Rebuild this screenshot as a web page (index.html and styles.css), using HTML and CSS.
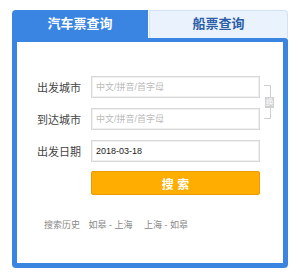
FILE: index.html
```html
<!DOCTYPE html>
<html lang="zh-CN">
<head>
  <meta charset="UTF-8" />
  <title>汽车票查询</title>
  <link rel="stylesheet" href="styles.css">
</head>
<body>
  <div class="search-box">
    <div class="tabs">
      <div class="tab active">汽车票查询</div>
      <div class="tab">船票查询</div>
    </div>
    <div class="panel">
      <form class="form">
        <label class="label" for="from">出发城市</label>
        <input class="field" type="text" id="from" placeholder="中文/拼音/首字母" />
        <div class="swap"><span class="swap-btn">换</span></div>

        <label class="label" for="to">到达城市</label>
        <input class="field" type="text" id="to" placeholder="中文/拼音/首字母" />

        <label class="label" for="date">出发日期</label>
        <input class="field" type="text" id="date" value="2018-03-18" />

        <button class="submit" type="button">搜 索</button>
      </form>

      <div class="history">
        <span class="history-title">搜索历史</span>
        <a href="#">如皋 - 上海</a>
        <a href="#">上海 - 如皋</a>
      </div>
    </div>
  </div>
</body>
</html>
```

FILE: styles.css
```css
body {
  margin: 0;
  background: #fff;
  font-family: "Helvetica Neue", "Liberation Sans", "Noto Sans CJK SC", sans-serif;
}
.search-box {
  width: 276px;
  margin: 10px 0 0 12px;
}
.tabs {
  display: flex;
  height: 28px;
}
.tab {
  line-height: 28px;
  text-align: center;
  font-size: 13px;
  font-weight: bold;
  color: #2c5ea8;
}
.tab.active {
  width: 136px;
  background: #3a84e2;
  color: #fff;
  border-radius: 4px 0 0 0;
}
.tab + .tab {
  flex: 1;
  margin-left: 1px;
  background: #eaf3fd;
  border: 1px solid #d3e2f4;
  border-bottom: none;
  border-radius: 0 4px 0 0;
  line-height: 26px;
}
.panel {
  background: #fff;
  border: 5px solid #3a84e2;
  border-top-width: 4px;
  border-radius: 0 3px 4px 4px;
  padding: 34px 0 0 20px;
  height: 187px;
}
.form {
  display: grid;
  grid-template-columns: 54px 169px 1fr;
  grid-auto-rows: 22px;
  row-gap: 10px;
  align-items: center;
}
.label {
  font-size: 11px;
  color: #444;
}
.field {
  box-sizing: border-box;
  width: 169px;
  height: 22px;
  margin: 0;
  padding: 0 4px;
  border: 1px solid #d8d8d8;
  box-shadow: inset 0 0 0 1px #f0f0f0;
  font-size: 9px;
  color: #222;
  font-family: inherit;
  outline: none;
}
.field::placeholder {
  color: #bbb;
  font-size: 9px;
}
.swap {
  grid-column: 3;
  grid-row: 1 / 3;
  align-self: center;
  position: relative;
  width: 6px;
  height: 32px;
  margin: 0 0 2px 4px;
  border: 1px solid #d0d0d0;
  border-left: none;
}
.swap-btn {
  position: absolute;
  top: 11px;
  left: 1px;
  width: 9px;
  height: 11px;
  background: #cfcfcf;
  color: #fff;
  font-size: 8px;
  line-height: 11px;
  text-align: center;
}
.submit {
  grid-column: 2;
  height: 24px;
  margin-top: -1px;
  align-self: start;
  background: #ffad00;
  border: 1px solid #e99b00;
  border-radius: 2px;
  color: #fff;
  font-family: inherit;
  font-size: 12px;
  font-weight: bold;
  cursor: pointer;
}
.history {
  margin: 24px 0 0 7px;
  font-size: 9px;
  color: #888;
}
.history a {
  color: #888;
  text-decoration: none;
  margin-left: 6px;
}
.history a + a {
  margin-left: 9px;
}
```
